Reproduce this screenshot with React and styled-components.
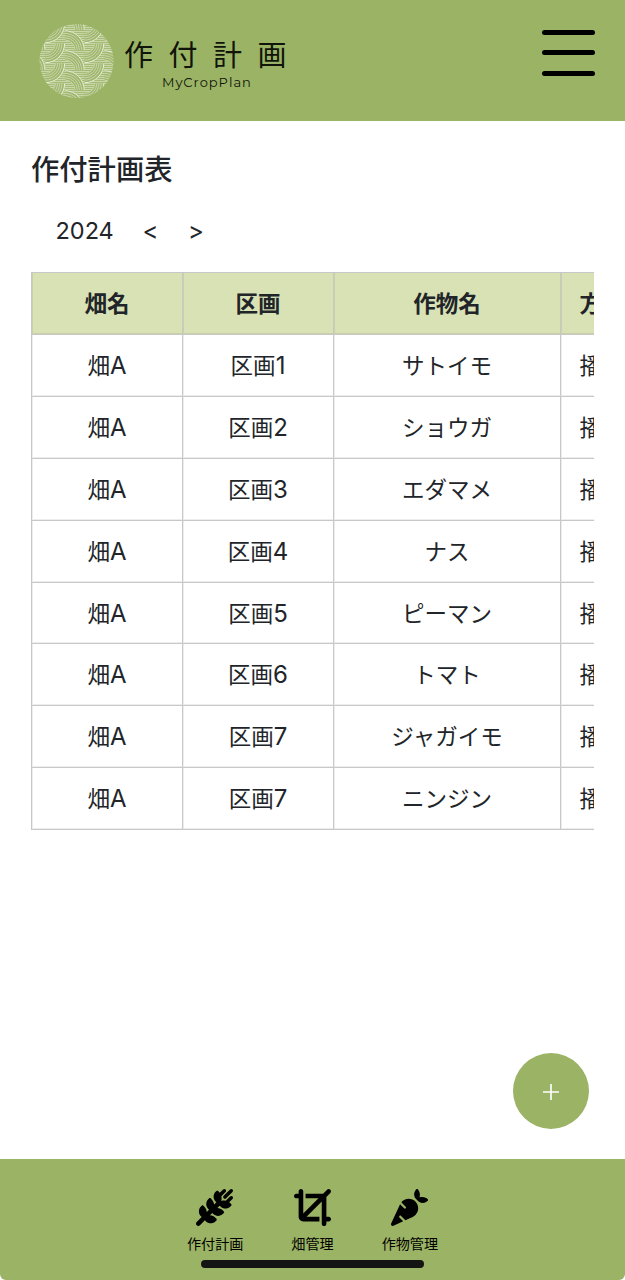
import React from 'react';
import styled, { createGlobalStyle } from 'styled-components';
import { FaWheatAwn, FaCrop, FaCarrot } from 'react-icons/fa6';

const Global = createGlobalStyle`
  *, *::before, *::after { box-sizing: border-box; }
  body {
    margin: 0;
    background: #fff;
    color: #212529;
    font-family: Inter, "Noto Sans CJK JP", sans-serif;
  }
`;

const Page = styled.div`
  display: flex;
  flex-direction: column;
  height: 1280px;
  overflow: hidden;
  background: #fff;
`;

const Header = styled.header`
  display: flex;
  justify-content: space-between;
  align-items: flex-start;
  flex: none;
  height: 121px;
  padding: 23px 30px 0 39px;
  background: #9bb365;
`;

const Brand = styled.div`
  display: flex;
  gap: 9px;
`;

const BrandText = styled.div`
  display: flex;
  flex-direction: column;
  align-items: flex-start;
  padding-top: 15px;
  color: #10140a;
`;

const BrandName = styled.div`
  font-size: 29px;
  line-height: 35px;
  letter-spacing: 15.5px;
  white-space: nowrap;
`;

const BrandSub = styled.div`
  padding-left: 38px;
  font-family: "Montserrat", Inter, sans-serif;
  font-size: 13px;
  line-height: 18px;
  letter-spacing: 1px;
`;

const MenuButton = styled.button`
  display: flex;
  flex-direction: column;
  gap: 15px;
  width: 53px;
  height: 46px;
  margin-top: 7px;
  padding: 0;
  border: 0;
  background: none;
`;

const MenuBar = styled.span`
  flex: none;
  height: 5px;
  border-radius: 3px;
  background: #000;
  &:last-child { margin-top: 1px; }
`;

const Main = styled.main`
  flex: 1;
  display: flex;
  flex-direction: column;
  padding: 30px 31px 30px;
`;

const Title = styled.h1`
  margin: 0;
  font-size: 28.3px;
  font-weight: 500;
  line-height: 38px;
`;

const YearBar = styled.div`
  display: flex;
  align-items: center;
  height: 36px;
  margin: 23px 0 24px;
  padding-left: 24.5px;
  font-size: 23.5px;
`;

const Year = styled.span`
  width: 87px;
`;

const YearStep = styled.span`
  width: 45.5px;
  padding-top: 1px;
  font-size: 24px;
`;

const TableScroller = styled.div`
  overflow: hidden;
`;

const Table = styled.div`
  width: 756px;
  border-top: 1px solid #c8c8c8;
  border-left: 1px solid #c8c8c8;
`;

const Row = styled.div`
  display: grid;
  grid-template-columns: 151px 151px 227px 226px;
  grid-template-rows: 100%;
  height: ${(p) => (p.$head ? '62px' : '61.9px')};
  background: ${(p) => (p.$head ? '#d9e2b4' : '#fff')};
  font-weight: ${(p) => (p.$head ? 600 : 400)};
`;

const Cell = styled.div`
  padding: 2px 18.5px 0;
  border-right: 1px solid #c8c8c8;
  border-bottom: 1px solid #c8c8c8;
  box-shadow: inset 1px -1px rgba(0, 0, 0, 0.07);
  font-size: 22.5px;
  line-height: 58.8px;
  text-align: ${(p) => (p.$start ? 'left' : 'center')};
  white-space: nowrap;
`;

const Latin = styled.span`
  font-size: 24px;
  line-height: 1;
`;

const AddButton = styled.button`
  display: flex;
  align-items: center;
  justify-content: center;
  align-self: flex-end;
  width: 76px;
  height: 76px;
  margin: auto 5px 0 0;
  padding: 2px 0 0;
  border: 0;
  border-radius: 50%;
  background: #9bb365;
`;

const Footer = styled.footer`
  display: flex;
  flex-direction: column;
  align-items: center;
  flex: none;
  height: 121px;
  padding-top: 30px;
  border-radius: 0 0 6px 6px;
  background: #9bb365;
`;

const Nav = styled.nav`
  display: flex;
  gap: 48px;
`;

const NavItem = styled.div`
  display: flex;
  flex-direction: column;
  align-items: center;
  color: #000;
  font-size: 14.1px;
  line-height: 20px;
  svg { display: block; width: 37px; height: 37px; margin-bottom: 8px; }
  &:first-child svg { margin-right: 2px; }
`;

const HomeIndicator = styled.div`
  width: 223px;
  height: 8px;
  margin-top: 6px;
  border-radius: 4px;
  background: #141414;
`;

const rows = [
  ['1', 'サトイモ'],
  ['2', 'ショウガ'],
  ['3', 'エダマメ'],
  ['4', 'ナス'],
  ['5', 'ピーマン'],
  ['6', 'トマト'],
  ['7', 'ジャガイモ'],
  ['7', 'ニンジン'],
];

const COL = 19.6;
const ROW = 20;

// One quarter-ring of woven furrows, opening up-right or down-right of its centre.
function Furrow({ cx, cy, up }) {
  const arc = (r) =>
    up
      ? `M${cx} ${cy - r}A${r} ${r} 0 0 1 ${cx + r} ${cy}`
      : `M${cx + r} ${cy}A${r} ${r} 0 0 1 ${cx} ${cy + r}`;
  return (
    <g fill="none">
      <path d={arc(14.6)} stroke="#a0b76e" strokeWidth="10" />
      {[10, 12.2, 14.4, 16.6].map((r) => (
        <path key={r} d={arc(r)} stroke="#d5e0bd" strokeWidth=".75" />
      ))}
      <path d={arc(19.2)} stroke="#eaf0dc" strokeWidth="1" />
    </g>
  );
}

function Emblem() {
  const lines = Array.from({ length: 38 }, (_, i) => i * 2);
  const steps = [-1, 0, 1, 2, 3, 4];
  return (
    <svg width="76" height="76" viewBox="0 0 76 76" aria-hidden="true">
      <clipPath id="emblem"><circle cx="37.5" cy="38" r="37" /></clipPath>
      <g clipPath="url(#emblem)">
        <rect width="76" height="76" fill="#a6bc77" />
        {lines.map((y) => (
          <path key={y} d={`M0 ${y + 0.5}H76`} stroke="#d0ddb5" strokeWidth=".8" />
        ))}
        {steps.map((r) => (
          <g key={r}>
            {[-13.2, 26, 65.2].map((x) => <Furrow key={x} cx={x} cy={7 + r * ROW} up />)}
            {[-13.2 - COL, 6.4, 45.6].map((x) => <Furrow key={x} cx={x} cy={r * ROW + 0.5} />)}
          </g>
        ))}
      </g>
    </svg>
  );
}

export default function App() {
  return (
    <Page>
      <Global />
      <Header>
        <Brand>
          <Emblem />
          <BrandText>
            <BrandName>作付計画</BrandName>
            <BrandSub>MyCropPlan</BrandSub>
          </BrandText>
        </Brand>
        <MenuButton aria-label="メニュー">
          <MenuBar /><MenuBar /><MenuBar />
        </MenuButton>
      </Header>
      <Main>
        <Title>作付計画表</Title>
        <YearBar>
          <Year>2024</Year>
          <YearStep>&lt;</YearStep>
          <YearStep>&gt;</YearStep>
        </YearBar>
        <TableScroller>
          <Table>
            <Row $head>
              <Cell>畑名</Cell>
              <Cell>区画</Cell>
              <Cell>作物名</Cell>
              <Cell $start>方法</Cell>
            </Row>
            {rows.map(([plot, crop], i) => (
              <Row key={i}>
                <Cell>畑<Latin>A</Latin></Cell>
                <Cell>区画<Latin>{plot}</Latin></Cell>
                <Cell>{crop}</Cell>
                <Cell $start>播種</Cell>
              </Row>
            ))}
          </Table>
        </TableScroller>
        <AddButton aria-label="追加">
          <svg width="16" height="16" viewBox="0 0 16 16" stroke="#fff" strokeWidth="1.6">
            <path d="M8 0V16M0 8H16" />
          </svg>
        </AddButton>
      </Main>
      <Footer>
        <Nav>
          <NavItem><FaWheatAwn />作付計画</NavItem>
          <NavItem><FaCrop />畑管理</NavItem>
          <NavItem><FaCarrot />作物管理</NavItem>
        </Nav>
        <HomeIndicator />
      </Footer>
    </Page>
  );
}
